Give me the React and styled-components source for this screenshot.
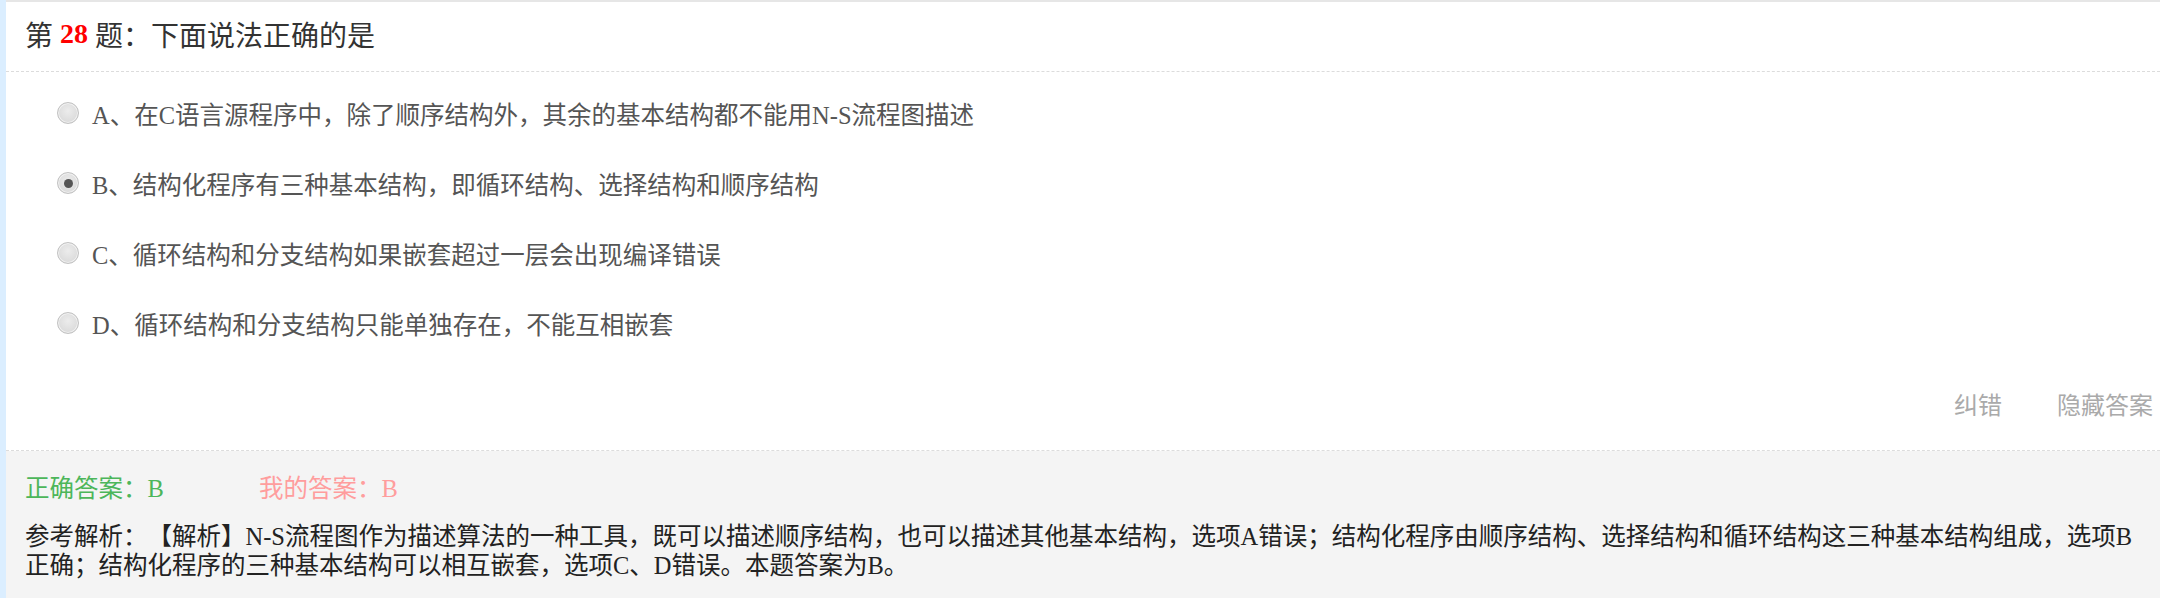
import React from 'react';
import styled, { createGlobalStyle } from 'styled-components';

const GlobalStyle = createGlobalStyle`
  html, body {
    margin: 0;
    padding: 0;
    background: #fff;
  }
  body {
    font-family: "Liberation Serif", "Noto Sans CJK SC", serif;
    text-spacing-trim: space-all;
  }
`;

const Page = styled.div`
  min-height: 598px;
  border-left: 6px solid #dbeeff;
  display: flex;
  flex-direction: column;
  box-sizing: border-box;
`;

const QuestionHead = styled.div`
  height: 72px;
  box-sizing: border-box;
  padding: 0 0 6px 19px;
  border-top: 2px solid #e6e6e6;
  border-bottom: 1px dashed #dcdcdc;
  display: flex;
  align-items: center;
  font-size: 28px;
  color: #333;
  white-space: pre;
`;

const QuestionNo = styled.span`
  color: #ff0000;
  font-weight: bold;
  font-family: "Liberation Serif", serif;
`;

const OptionList = styled.div`
  padding-top: 6px;
`;

const OptionRow = styled.label`
  height: 70px;
  display: flex;
  align-items: center;
  gap: 13px;
  padding-left: 51px;
  font-size: 24.5px;
  color: #555;
  cursor: pointer;
`;

const Radio = styled.span`
  width: 22px;
  height: 22px;
  box-sizing: border-box;
  border-radius: 50%;
  border: 1px solid #c2c2c2;
  background: radial-gradient(circle at 50% 40%, #ececec, #d4d4d4);
  box-shadow: inset 0 0 0 1px rgba(255, 255, 255, 0.6);
  display: flex;
  align-items: center;
  justify-content: center;
  flex-shrink: 0;

  &::after {
    content: '';
    display: ${(p) => (p.checked ? 'block' : 'none')};
    width: 9px;
    height: 9px;
    border-radius: 50%;
    background: #555;
  }
`;

const Actions = styled.div`
  display: flex;
  justify-content: flex-end;
  gap: 55px;
  padding: 36px 7px 32px 0;
  line-height: 24px;
  font-size: 24px;
  color: #aaa;
  border-bottom: 1px dashed #dcdcdc;
`;

const ActionLink = styled.span`
  cursor: pointer;
`;

const AnswerPanel = styled.div`
  flex: 1;
  background: #f4f4f4;
  padding: 23px 15px 0 19px;
  font-size: 24.5px;
`;

const AnswerLine = styled.div`
  display: flex;
  line-height: 30px;
`;

const AnswerTag = styled.span`
  color: ${(p) => p.color};
  width: ${(p) => p.width || 'auto'};
`;

const Analysis = styled.div`
  margin-top: 18px;
  line-height: 29px;
  color: #222;
`;

const options = [
  { key: 'A', text: '在C语言源程序中，除了顺序结构外，其余的基本结构都不能用N-S流程图描述' },
  { key: 'B', text: '结构化程序有三种基本结构，即循环结构、选择结构和顺序结构' },
  { key: 'C', text: '循环结构和分支结构如果嵌套超过一层会出现编译错误' },
  { key: 'D', text: '循环结构和分支结构只能单独存在，不能互相嵌套' },
];

const App = () => {
  const picked = 'B';

  return (
    <>
      <GlobalStyle />
      <Page>
        <QuestionHead>
          第 <QuestionNo>28</QuestionNo> 题：下面说法正确的是
        </QuestionHead>

        <OptionList>
          {options.map((o) => (
            <OptionRow key={o.key}>
              <Radio checked={o.key === picked} />
              <span>
                {o.key}、{o.text}
              </span>
            </OptionRow>
          ))}
        </OptionList>

        <Actions>
          <ActionLink>纠错</ActionLink>
          <ActionLink>隐藏答案</ActionLink>
        </Actions>

        <AnswerPanel>
          <AnswerLine>
            <AnswerTag color="#4cb65a" width="234px">正确答案：B</AnswerTag>
            <AnswerTag color="#ff9d9d">我的答案：B</AnswerTag>
          </AnswerLine>
          <Analysis>
            参考解析：【解析】N-S流程图作为描述算法的一种工具，既可以描述顺序结构，也可以描述其他基本结构，选项A错误；结构化程序由顺序结构、选择结构和循环结构这三种基本结构组成，选项B正确；结构化程序的三种基本结构可以相互嵌套，选项C、D错误。本题答案为B。
          </Analysis>
        </AnswerPanel>
      </Page>
    </>
  );
};

export default App;
